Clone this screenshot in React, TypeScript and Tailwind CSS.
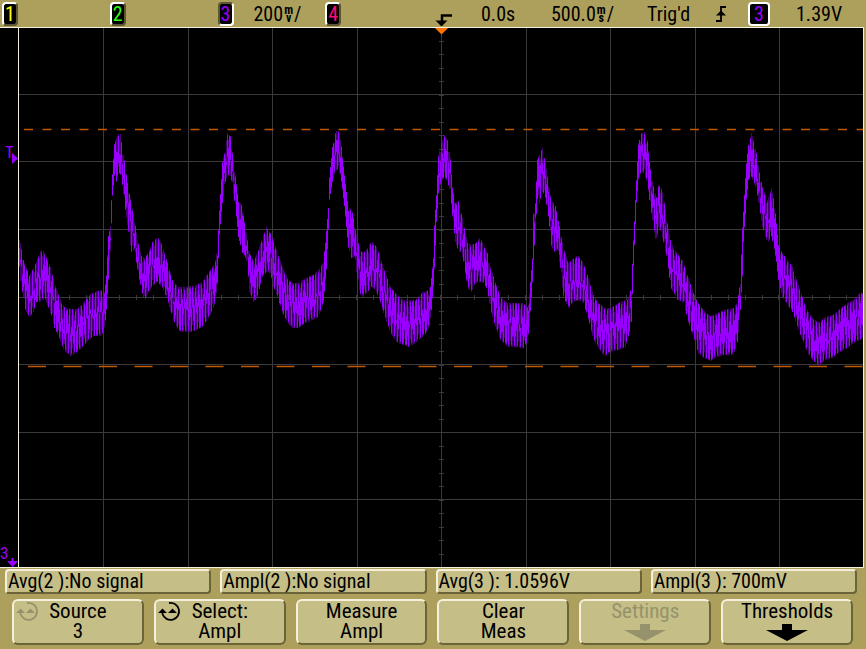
const PURPLE = '#9a00ff'
const PLOT_TOP = 27

// trace envelope: x, upper edge, lower edge
const envelope = [
  [18, 227, 254], [20, 243, 281], [23, 260, 298], [25, 266, 310], [29, 275, 318], [33, 268, 312],
  [36, 262, 302], [39, 252, 302], [42, 249, 300], [45, 255, 300], [48, 261, 308], [51, 270, 316],
  [54, 283, 328], [58, 294, 336], [61, 302, 345], [65, 308, 352], [70, 309, 356], [76, 309, 353],
  [82, 304, 347], [88, 295, 340], [94, 292, 336], [100, 290, 336], [104, 292, 332], [106, 275, 310],
  [108, 235, 280], [110, 226, 251], [112, 174, 196], [114, 143, 176], [116, 138, 182], [118, 134, 172],
  [120, 134, 175], [122, 150, 185], [124, 160, 203], [127, 182, 225], [131, 204, 252], [134, 218, 250],
  [137, 240, 270], [141, 256, 290], [144, 258, 302], [148, 252, 292], [152, 242, 286], [157, 237, 282],
  [162, 246, 288], [167, 262, 300], [172, 280, 318], [178, 287, 331], [184, 287, 332], [190, 286, 332],
  [196, 285, 330], [202, 282, 327], [208, 272, 318], [213, 265, 308], [215, 260, 302], [217, 248, 284],
  [219, 210, 235], [222, 162, 203], [225, 148, 182], [227, 133, 175], [230, 136, 176], [232, 152, 187],
  [235, 175, 208], [238, 202, 237], [242, 205, 253], [244, 222, 256], [247, 240, 263], [249, 253, 292],
  [253, 260, 302], [257, 253, 297], [262, 237, 277], [266, 227, 272], [270, 233, 273], [273, 240, 287],
  [277, 253, 297], [282, 267, 313], [287, 278, 323], [292, 283, 328], [298, 283, 328], [305, 278, 323],
  [312, 275, 320], [318, 270, 317], [323, 262, 303], [326, 230, 270], [328, 207, 230], [329, 177, 200],
  [332, 147, 182], [335, 133, 170], [337, 129, 170], [340, 135, 175], [342, 157, 190], [345, 183, 217],
  [348, 210, 248], [351, 207, 258], [354, 223, 257], [357, 240, 280], [360, 250, 295], [363, 253, 297],
  [367, 248, 292], [371, 241, 287], [375, 245, 290], [379, 253, 300], [383, 268, 313], [390, 287, 333],
  [397, 295, 343], [403, 300, 345], [408, 300, 347], [415, 300, 343], [422, 292, 337], [425, 292, 335],
  [430, 287, 323], [433, 257, 287], [434, 223, 270], [436, 195, 222], [438, 155, 195], [441, 143, 180],
  [444, 135, 178], [447, 140, 182], [450, 158, 193], [452, 187, 217], [455, 203, 242], [458, 201, 252],
  [461, 213, 252], [464, 228, 267], [467, 242, 288], [471, 245, 292], [475, 243, 283], [480, 237, 282],
  [483, 245, 283], [487, 253, 290], [490, 267, 310], [495, 282, 327], [500, 297, 340], [507, 303, 347],
  [513, 303, 347], [523, 303, 348], [527, 307, 342], [529, 293, 327], [532, 258, 283], [533, 213, 262],
  [535, 203, 230], [537, 158, 200], [539, 155, 203], [542, 148, 192], [545, 163, 198], [548, 182, 217],
  [551, 202, 247], [554, 202, 252], [557, 215, 250], [560, 232, 268], [563, 247, 297], [568, 263, 308],
  [573, 258, 302], [578, 256, 300], [583, 263, 303], [588, 278, 320], [593, 295, 340], [598, 303, 348],
  [604, 308, 357], [610, 308, 352], [618, 303, 350], [625, 300, 347], [628, 298, 337], [631, 287, 322],
  [633, 240, 267], [636, 180, 203], [638, 143, 180], [641, 133, 170], [644, 132, 175], [647, 140, 183],
  [649, 162, 200], [652, 182, 220], [656, 197, 245], [658, 185, 227], [661, 188, 233], [664, 202, 248],
  [667, 223, 260], [670, 240, 287], [673, 248, 293], [678, 255, 300], [683, 262, 303], [688, 278, 323],
  [693, 293, 337], [698, 303, 353], [703, 310, 358], [710, 316, 361], [717, 313, 357], [723, 310, 355],
  [733, 308, 355], [737, 302, 343], [740, 280, 310], [742, 227, 277], [743, 210, 243], [746, 162, 200],
  [748, 145, 180], [751, 133, 177], [753, 140, 182], [756, 153, 190], [759, 172, 208], [762, 187, 227],
  [767, 200, 243], [771, 188, 237], [774, 203, 250], [776, 223, 263], [778, 245, 280], [782, 253, 297],
  [787, 260, 305], [792, 267, 312], [797, 282, 327], [802, 297, 340], [807, 310, 353], [812, 318, 360],
  [818, 322, 366], [825, 317, 360], [832, 315, 358], [838, 310, 353], [847, 303, 348], [853, 300, 343],
  [860, 292, 340], [863, 294, 336],
]

// repeatable noise in 0..1
function noise(n: number) {
  const v = Math.sin(n * 127.1) * 43758.5453
  return v - Math.floor(v)
}

// one vertical stroke per pixel column; the ripple has a period of just under three columns
function buildTrace() {
  let bright = ''
  let dim = ''
  let i = 0
  for (let x = 18; x < 863; x++) {
    while (x > envelope[i + 1][0]) i++
    const [x0, t0, b0] = envelope[i]
    const [x1, t1, b1] = envelope[i + 1]
    const f = (x - x0) / (x1 - x0)
    const top = t0 + (t1 - t0) * f - PLOT_TOP
    const bottom = b0 + (b1 - b0) * f - PLOT_TOP
    const h = bottom - top
    const steep = Math.abs((t1 - t0) / (x1 - x0)) > 8
    const ripple = Math.sin((x * 2 * Math.PI) / 2.86)
    const upper = steep || ripple > 0.25 ? 0.06 * noise(x) : 0.22 + 0.36 * noise(x + 0.5)
    const lower = steep || ripple < -0.25 ? 0.06 * noise(x) : 0.2 + 0.36 * noise(x + 0.7)
    const from = top + h * upper
    const to = Math.max(from + 3, bottom - h * lower)
    bright += `M${x + 0.5} ${from.toFixed(1)}V${to.toFixed(1)}`
    dim += `M${x + 0.5} ${(top + h * (ripple > -0.6 ? 0 : 0.14)).toFixed(1)}V${(bottom - h * (ripple < 0.6 ? 0 : 0.14)).toFixed(1)}`
  }
  return { bright, dim }
}

const trace = buildTrace()

const columns = [103, 188, 272, 357, 441, 526, 610, 695, 779]
const rows = [67, 134, 202, 270, 337, 405, 472]
const xTicks = Array.from({ length: 49 }, (_, i) => Math.round(18 + (i + 1) * 16.9))
const yTicks = Array.from({ length: 39 }, (_, i) => Math.round((i + 1) * 13.5))

const measurements = ['Avg(2 ):No signal', 'Ampl(2 ):No signal', 'Avg(3 ): 1.0596V', 'Ampl(3 ): 700mV']

const softkeys = [
  { label: 'Source', value: '3', knob: true, disabledKnob: true },
  { label: 'Select:', value: 'Ampl', knob: true },
  { label: 'Measure', value: 'Ampl' },
  { label: 'Clear', value: 'Meas' },
  { label: 'Settings', submenu: true, disabled: true },
  { label: 'Thresholds', submenu: true },
]

function Badge({ children, className }: { children: string; className: string }) {
  return (
    <span className={`flex h-6 items-center justify-center rounded-sm border-2 bg-black ${className}`}>
      {children}
    </span>
  )
}

function Unit({ top, bottom }: { top: string; bottom: string }) {
  return (
    <span className="flex flex-col items-center px-px text-[12px] font-bold leading-[8px]">
      <span>{top}</span>
      <span>{bottom}</span>
    </span>
  )
}

function KnobIcon({ muted }: { muted?: boolean }) {
  return (
    <svg
      viewBox="0 0 24 22"
      className={`absolute left-0.5 top-0 h-[22px] w-6 ${muted ? 'text-[#96926c]' : 'text-black'}`}
      aria-hidden="true"
    >
      <path d="M11 2A8.500 8.500 0 1 1 4.500 13V11" fill="none" stroke="currentColor" strokeWidth="1.8" />
      <path d="M0 12L4.500 7.500L9 12Z M10 12L14.500 7.500L19 12Z" fill="currentColor" />
    </svg>
  )
}

function StatusBar() {
  return (
    <header className="flex h-[27px] items-center text-[20px] leading-6">
      <div className="grid w-1/2 grid-cols-4 pl-0.5">
        <Badge className="w-4 border-[#5c5632] border-l-white border-t-white text-[#ffff00]">1</Badge>
        <Badge className="w-4 border-[#5c5632] border-l-white border-t-white text-[#30ff10]">2</Badge>
        <div className="flex items-center gap-5">
          <Badge className="w-4 border-[#5c5632] border-b-white border-r-white text-[#9a00ff]">3</Badge>
          <span className="flex items-center">
            200
            <Unit top="m" bottom="v" />/
          </span>
        </div>
        <Badge className="w-4 border-[#5c5632] border-l-white border-t-white text-[#ff0a78]">4</Badge>
      </div>
      <div className="grid w-1/2 grid-cols-[46fr_70fr_96fr_69fr_32fr_48fr_70fr] items-center pl-0.5">
        <svg viewBox="0 0 18 24" className="h-6 w-[18px]" aria-hidden="true">
          <path d="M17 13.500H7V20" fill="none" stroke="black" strokeWidth="2.5" />
          <path d="M0.500 18.500H12.500L6.500 24.500Z" />
        </svg>
        <span>0.0s</span>
        <span className="flex items-center">
          500.0
          <Unit top="m" bottom="s" />/
        </span>
        <span>Trig'd</span>
        <svg viewBox="0 0 10 16" className="h-4 w-2.5" aria-hidden="true">
          <path d="M0 15H5V1H10" fill="none" stroke="black" strokeWidth="1.8" />
          <path d="M0 9.500L5 4.500L10 9.500Z" />
        </svg>
        <Badge className="w-[22px] border-white text-[#9a00ff]">3</Badge>
        <span>1.39V</span>
      </div>
    </header>
  )
}

function Plot() {
  return (
    <svg viewBox="0 0 866 541" className="block h-auto w-full" role="img" aria-label="Channel 3 waveform">
      <rect width="863" height="541" fill="black" />
      <g stroke="#3a3a3a" strokeWidth="1">
        {columns.map((x) => (
          <path key={x} d={`M${x + 0.5} 0V540`} />
        ))}
        {rows.map((y) => (
          <path key={y} d={`M18 ${y + 0.5}H863`} />
        ))}
        {xTicks.map((x) => (
          <path key={x} d={`M${x + 0.5} 268V273`} />
        ))}
        {yTicks.map((y) => (
          <path key={y} d={`M439 ${y + 0.5}H444`} />
        ))}
      </g>
      <path d={trace.dim} stroke={PURPLE} strokeOpacity="0.45" />
      <path d={trace.bright} stroke={PURPLE} />
      <path d="M24 102.500H863" stroke="#c05800" strokeWidth="1.3" strokeDasharray="9 9.5" />
      <path d="M28 339.500H863" stroke="#c05800" strokeWidth="1.3" strokeDasharray="18 17.5" />
      <path d="M0 0.500H863.500V540.500H0M18.500 0V540" fill="none" stroke="#f4f0dc" />
      <path d="M435 1H448L441.500 7.500Z" fill="#ff7200" />
      <g fill={PURPLE} fontSize="17">
        <text x="5" y="131">T</text>
        <path d="M12 126L18 131.500L12 137Z" />
        <text x="0" y="532">3</text>
        <path d="M7 534H11.500V531H13.500V534H18L12.500 540Z" />
      </g>
    </svg>
  )
}

export default function App() {
  return (
    <main className="min-h-screen bg-[#aca05c] text-black [font-family:'Liberation_Sans_Narrow','Roboto_Condensed','Liberation_Sans',sans-serif]">
      <StatusBar />
      <Plot />
      <div className="grid grid-cols-4 gap-[9px] pl-[5px] pr-[9px] pt-px text-[20px]">
        {measurements.map((text) => (
          <output
            key={text}
            className="h-[25px] whitespace-pre rounded-sm border-2 border-[#6a6438] border-l-[#f4f0dc] border-t-[#f4f0dc] bg-[#c5be87] px-px leading-[20px]"
          >
            {text}
          </output>
        ))}
      </div>
      <div className="grid grid-cols-6 gap-2.5 pl-3 pr-[13px] pt-[5px] text-[21px] leading-5">
        {softkeys.map((key) => (
          <button
            key={key.label}
            type="button"
            disabled={key.disabled}
            className="relative flex h-[46px] flex-col items-center rounded-md border-2 border-[#6a6438] border-l-[#f4f0dc] border-t-[#f4f0dc] bg-[#c5be87] disabled:text-[#96926c]"
          >
            {key.knob && <KnobIcon muted={key.disabledKnob} />}
            <span>{key.label}</span>
            {key.value && <span>{key.value}</span>}
            {key.submenu && (
              <svg viewBox="0 0 42 17" className="mt-[3px] h-[17px] w-[42px]" fill="currentColor" aria-hidden="true">
                <path d="M16 0H26V6H42L21 17L0 6H16Z" />
              </svg>
            )}
          </button>
        ))}
      </div>
    </main>
  )
}
